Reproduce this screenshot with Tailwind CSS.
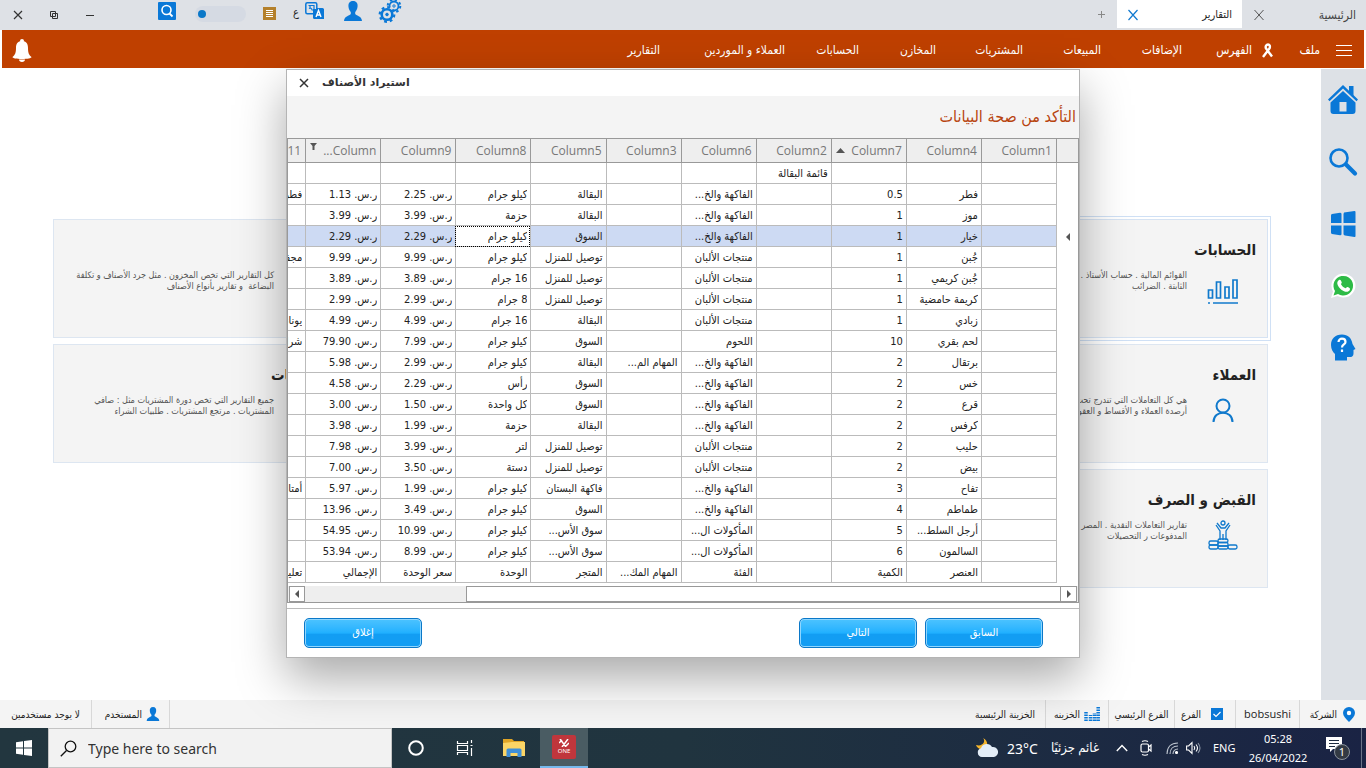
<!DOCTYPE html>
<html lang="ar" dir="rtl">
<head>
<meta charset="utf-8">
<title>التقارير</title>
<script src="https://cdn.jsdelivr.net/npm/@tailwindcss/browser@4"></script>
</head>
<body class="relative flex h-screen flex-col overflow-hidden bg-white font-['DejaVu_Sans_Condensed','DejaVu_Sans',sans-serif] text-[11px] text-[#222]">

<!-- title bar -->
<header class="flex h-[30px] shrink-0 items-center justify-between bg-[#dee1e6]">
  <div class="flex h-full items-start">
    <div class="flex h-7 w-[124px] items-center justify-between pt-[2px] pr-[10px] pl-[10px]">
      <a href="#" class="text-[12px] text-[#444]">الرئيسية</a>
      <button aria-label="إغلاق الرئيسية" class="pl-[1px]"><svg class="size-3" viewBox="0 0 12 12" stroke="#555" fill="none"><path d="M1.500 1l9 10M10.500 1l-9 10"/></svg></button>
    </div>
    <div class="flex h-7 w-[125px] items-center justify-between bg-white pt-[2px] pr-[10px] pl-[10px]">
      <a href="#">التقارير</a>
      <button aria-label="إغلاق التقارير"><svg class="size-3" viewBox="0 0 12 12" stroke="#1079d0" stroke-width="1.200" fill="none"><path d="M1.500 1l9 10M10.500 1l-9 10"/></svg></button>
    </div>
    <button aria-label="تبويب جديد" class="mr-3 flex h-7 items-center"><svg class="size-[7px]" viewBox="0 0 7 7" stroke="#888" fill="none"><path d="M3.500 0v7M0 3.500h7"/></svg></button>
  </div>
  <div dir="ltr" class="flex h-full w-[406px] items-start">
    <div class="flex h-full w-[158px] items-center pl-[13px]">
      <button aria-label="إغلاق" class="w-9"><svg class="size-[10px]" viewBox="0 0 10 10" stroke="#333" stroke-width="1.200" fill="none"><path d="M1 1l8 8M9 1L1 9"/></svg></button>
      <button aria-label="استعادة" class="w-9"><svg class="size-[10px]" viewBox="0 0 10 10" stroke="#333" fill="none"><path d="M1.500 1.500h5v5h-5zM3.500 3.500h5v5h-5z"/></svg></button>
      <button aria-label="تصغير"><svg class="size-[10px]" viewBox="0 0 10 10" stroke="#333" fill="none"><path d="M1 5.500h8"/></svg></button>
    </div>
    <button aria-label="بحث" class="mt-[2px]"><svg class="size-[18px]" viewBox="0 0 18 18"><rect width="18" height="18" rx="1" fill="#0a78d7"/><circle cx="8.500" cy="8" r="4.500" fill="none" stroke="#fff" stroke-width="1.600"/><path d="M11.500 11.500l3 3" stroke="#fff" stroke-width="1.800"/></svg></button>
    <label class="mt-[6px] ml-[19px] flex h-4 w-[51px] items-center rounded-full bg-[#d5dae3] pl-[3px]">
      <input type="checkbox" aria-label="الوضع" class="size-2 appearance-none rounded-full bg-[#0a78c8]">
    </label>
    <button aria-label="قائمة" class="mt-[7px] ml-[17px]"><svg class="size-[13px]" viewBox="0 0 13 13"><path fill="#b4802b" d="M0 0h13v13H0z"/><path stroke="#fff" d="M3 3.500h7M3 5.500h7M3 7.500h7M3 9.500h7"/></svg></button>
    <span class="mt-[5px] w-[29px] pr-[6px] text-right">ع</span>
    <button aria-label="اللغة" class="mt-[1px]"><svg class="size-[19px]" viewBox="0 0 19 19"><rect x="8" y="7" width="11" height="11" rx="1.500" fill="#0a78d7"/><rect x=".8" y="1.800" width="11" height="11" rx="1.500" fill="#dee1e6" stroke="#0a78d7" stroke-width="1.500"/><path d="M8 8h11v10H9.500L8 16z" fill="#0a78d7"/><path d="M3.500 4.500h5.500v3.500M4 7.500q2-1.500 3.500 2M5 4.500v2" fill="none" stroke="#0a78d7" stroke-width="1.200"/><path d="M11 16l2.500-6.500L16 16M12 14h3" fill="none" stroke="#fff" stroke-width="1.400"/></svg></button>
    <button aria-label="المستخدم" class="mt-[1px] ml-5"><svg class="h-5 w-[18px]" viewBox="0 0 18 20" fill="#0a78d7"><path d="M9 0C5.500 0 4 2.500 4.500 6c.3 2.500 1.500 4 2.300 5v2C5 15 .5 15 0 20h18c-.5-5-5-5-6.800-7v-2c.8-1 2-2.500 2.300-5C14 2.500 12.500 0 9 0z"/></svg></button>
    <button aria-label="الإعدادات" class="ml-4"><svg class="size-6" viewBox="0 0 24 24" fill="none" stroke="#0a78d7"><circle cx="16" cy="6" r="4.500" stroke-width="1.800"/><circle cx="16" cy="6" r="6.300" stroke-width="2" stroke-dasharray="2.400 2.550"/><circle cx="16" cy="6" r="1.200"/><circle cx="9" cy="14.500" r="8" fill="#dee1e6" stroke="none"/><circle cx="9" cy="14.500" r="5.300" stroke-width="2.600"/><circle cx="9" cy="14.500" r="7.300" stroke-width="2.200" stroke-dasharray="2.800 2.930"/><circle cx="9" cy="14.500" r="1.300" fill="#0a78d7"/></svg></button>
  </div>
</header>

<!-- main menu -->
<nav class="mx-[2px] flex h-[38px] shrink-0 items-center bg-[#bf4000] pt-[2px] text-[12px] text-white">
  <button aria-label="القائمة" class="mr-3 w-8"><svg class="h-[11px] w-4" viewBox="0 0 16 11" stroke="#fff"><path d="M0 .5h16M0 5.500h16M0 10.500h16"/></svg></button>
  <a href="#" class="w-[46px]">ملف</a>
  <a href="#" class="flex w-[92px] items-center gap-[9px]"><svg class="h-[15px] w-[13px]" viewBox="0 0 13 15" fill="none" stroke="#fff" stroke-width="2.400"><path d="M2 14L8.500 5.500C9.500 3 8.500 1.500 7 1.500S4 3 5 5.500l6 8"/></svg>الفهرس</a>
  <a href="#" class="w-[81px]">الإضافات</a>
  <a href="#" class="w-[78px]">المبيعات</a>
  <a href="#" class="w-[87px]">المشتريات</a>
  <a href="#" class="w-[77px]">المخازن</a>
  <a href="#" class="w-[74px]">الحسابات</a>
  <a href="#" class="w-[125px]">العملاء و الموردين</a>
  <a href="#">التقارير</a>
  <button aria-label="التنبيهات" class="mr-auto ml-[10px]"><svg class="h-[23px] w-5" viewBox="0 0 20 23" fill="#fff"><circle cx="10" cy="2" r="2"/><path d="M10 2C5.500 2 4 5 4 9c0 5-1 7-3.500 9 0 1.200 4 2 9.500 2s9.500-.8 9.500-2C17 16 16 14 16 9c0-4-1.500-7-6-7zM7 20.500c0 1.200 1.200 2.500 3 2.500s3-1.300 3-2.500z"/></svg></button>
</nav>

<div class="flex min-h-0 flex-1 pt-px">
  <!-- side tools -->
  <aside class="flex w-[45px] shrink-0 flex-col items-center gap-[30px] bg-[#dde1e6] pt-[15px] pr-[2px]">
    <button aria-label="الرئيسية"><svg class="size-8" viewBox="0 0 32 32" fill="#0a78d7"><path d="M22 2h4.500v10L22 8z"/><path d="M16 1L1 15.500l1.500 1.800L16 4.500l13.500 12.800L31 15.500z"/><path fill-rule="evenodd" d="M16 7L3.500 18.500V27c0 2 1 3 3 3h19c2 0 3-1 3-3v-8.500zM12.500 18h7v9.500h-7z"/></svg></button>
    <button aria-label="بحث"><svg class="size-8" viewBox="0 0 32 32" fill="none" stroke="#0a78d7"><circle cx="12" cy="12" r="8.500" stroke-width="2.600"/><path d="M19 18.500L28 27.500" stroke-width="4.200" stroke-linecap="round"/></svg></button>
    <button aria-label="ويندوز"><svg class="size-8" viewBox="0 0 32 32" fill="#0a78d7"><path d="M5 6l8-1.200q1.500 0 1.500 1.200v9H4V7.500Q4 6.200 5 6zM17 4.500L27.500 3q1 0 1 1v11H16.500V6zM4 17.500h10.500V26q0 1.500-1.500 1.300L5 26q-1-.3-1-1.500zM16.500 17.500h12V28q0 1.200-1 1L18 27.500q-1.500-.2-1.500-1.500z"/></svg></button>
    <button aria-label="واتساب"><svg class="size-8" viewBox="0 0 32 32"><path d="M4 28l2-6.500A12 12 0 1 1 10.500 26z" fill="#fff"/><path d="M6.500 25.500L8 21A9.800 9.800 0 1 1 11 24z" fill="#2dbb46"/><path d="M12 10c1.500-1 2 .5 2.700 2.200.4 1-1 1.500-.7 2 1 2 2.500 3.300 4.500 4 .6.200 1.300-1.400 2-1.100 2 .9 3 1.200 2.300 2.900-1 2-3.500 2.200-5.800 1.200-3.500-1.500-5-3.500-6.200-5.900-1-2-.5-4.200 1.200-5.300z" fill="#fff"/></svg></button>
    <button aria-label="مساعدة"><svg class="size-8" viewBox="0 0 32 32"><path d="M15 2.500C8 2.500 4 7 4 13c0 4.500 2 7 4 9v6.500h12V25h3c3 0 3.500-2 3.500-4v-3l2-1-3-5C24.500 6 21 2.500 15 2.500z" fill="#0a78d7"/><path d="M11.500 10c0-4.500 7-4.500 7 0 0 2.500-3.500 2.500-3.500 5.500M15 17.500v2.500" fill="none" stroke="#fff" stroke-width="2.200"/></svg></button>
  </aside>

  <!-- report cards -->
  <main class="min-w-0 flex-1 pt-[150px] pr-[53px] pl-[53px]">
    <div class="grid grid-cols-4 grid-rows-[repeat(3,119px)] gap-x-[5px] gap-y-[6px]">
      <section class="border border-[#d6e3f3] bg-[#f4f4f4] px-[11px] pt-[18px] outline outline-offset-2 outline-[#cfe0f5]">
        <h2 class="text-[15px]/6 font-bold">الحسابات</h2>
        <div class="flex gap-5 pt-2 pr-[17px]">
          <svg class="mt-2 size-8 shrink-0" viewBox="0 0 32 32" fill="none" stroke="#1079cc" stroke-width="1.700"><path d="M1.500 12h4v8h-4zM9.500 4h4v16h-4zM18 9h4v11h-4zM26 2h4v18h-4zM6 25h25M1 25h2"/></svg>
          <p class="text-[9px]/[11px] whitespace-nowrap text-[#555]">القوائم المالية . حساب الأستاذ .<br>الثابتة . الضرائب</p>
        </div>
      </section>
      <section class="col-start-4 border border-[#dde6f1] bg-[#f4f4f4] px-[11px] pt-[18px]">
        <h2 class="text-[15px]/6 font-bold">المخازن</h2>
        <p class="pt-2 pr-[67px] text-[9px]/[11px] whitespace-nowrap text-[#555]">كل التقارير التي تخص المخزون . مثل جرد الأصناف و تكلفة<br>البضاعة &nbsp;و تقارير بأنواع الأصناف</p>
      </section>
      <section class="border border-[#dde6f1] bg-[#f4f4f4] px-[11px] pt-[18px]">
        <h2 class="text-[15px]/6 font-bold">العملاء</h2>
        <div class="flex gap-5 pt-2 pr-[17px]">
          <svg class="size-8 shrink-0" viewBox="0 0 32 32" fill="none" stroke="#1079cc" stroke-width="2"><circle cx="16" cy="11" r="6.500"/><path d="M6.500 27c0-12.500 19-12.500 19 0"/></svg>
          <p class="text-[9px]/[11px] whitespace-nowrap text-[#555]">هي كل التعاملات التي تندرج تحت<br>أرصدة العملاء و الأقساط و العقود</p>
        </div>
      </section>
      <section class="col-start-4 border border-[#dde6f1] bg-[#f4f4f4] px-[11px] pt-[18px]">
        <h2 class="text-[15px]/6 font-bold">المشتريات</h2>
        <p class="pt-2 pr-[67px] text-[9px]/[11px] whitespace-nowrap text-[#555]">جميع التقارير التي تخص دورة المشتريات مثل : صافي<br>المشتريات . مرتجع المشتريات . طلبيات الشراء</p>
      </section>
      <section class="border border-[#dde6f1] bg-[#f4f4f4] px-[11px] pt-[18px]">
        <h2 class="text-[15px]/6 font-bold">القبض و الصرف</h2>
        <div class="flex gap-5 pt-2 pr-[17px]">
          <svg class="size-8 shrink-0" viewBox="0 0 32 32" fill="none" stroke="#1079cc" stroke-width="1.300"><circle cx="16" cy="3" r="2"/><path d="M10 3l4 5h4l4-5M9 5l4 6v9M23 5l-4 6v9M16 14v6"/><rect x="11" y="19" width="10" height="3.500" rx="1.700"/><rect x="2" y="21" width="9" height="4" rx="1.700"/><rect x="11" y="22.500" width="10" height="3.500" rx="1.500"/><rect x="2" y="25" width="9" height="4" rx="1.700"/><rect x="11" y="26" width="10" height="3" rx="1.500"/><rect x="21" y="25" width="9" height="4" rx="1.700"/></svg>
          <p class="text-[9px]/[11px] whitespace-nowrap text-[#555]">تقارير التعاملات النقدية . المصر<br>المدفوعات ر التحصيلات</p>
        </div>
      </section>
    </div>
  </main>
</div>

<!-- status bar -->
<footer class="flex h-7 shrink-0 items-center bg-[#f4f4f4] text-[10px]">
  <div class="flex h-full w-[67px] items-center gap-[6px] border-l border-[#d8d8d8] pr-[11px]">
    <svg class="h-[15px] w-3" viewBox="0 0 12 15"><path d="M6 0a6 6 0 0 1 6 6c0 3-3 6-6 9-3-3-6-6-6-9a6 6 0 0 1 6-6z" fill="#0a78d7"/><circle cx="6" cy="6" r="2.200" fill="#fff"/></svg>الشركة</div>
  <div class="flex h-full w-16 items-center justify-center border-l border-[#d8d8d8] font-['Open_Sans',sans-serif] text-[11px]">bobsushi</div>
  <label class="flex h-full w-[61px] items-center gap-[10px] border-l border-[#d8d8d8] pr-3">
    <span class="relative flex"><input type="checkbox" checked class="size-3 appearance-none bg-[#0a78d7]"><svg class="pointer-events-none absolute inset-0 size-3" viewBox="0 0 12 12" fill="none" stroke="#fff" stroke-width="1.200"><path d="M2.500 6l2.500 2.500L9.500 4"/></svg></span>الفرع</label>
  <div class="flex h-full w-[66px] items-center justify-center border-l border-[#d8d8d8] whitespace-nowrap">الفرع الرئيسي</div>
  <div class="flex h-full w-[63px] items-center gap-1 border-l border-[#d8d8d8] pr-2">
    <svg class="h-[14px] w-4 shrink-0" viewBox="0 0 16 14" stroke="#0a78d7" fill="none" stroke-width="3.500"><path stroke-dasharray="1.500 1" d="M2 14V4M6.500 14V8M10.500 14V6M14.200 14V0"/></svg>الخزينه</div>
  <div class="flex h-full items-center pr-[10px]">الخزينة الرئيسية</div>
  <div class="mr-auto flex h-full w-[79px] items-center gap-1 border-x border-[#d8d8d8] pr-[9px]">
    <svg class="h-[14px] w-[14px] shrink-0" viewBox="0 0 18 20" fill="#0a78d7"><path d="M9 0C5.500 0 4 2.500 4.500 6c.3 2.500 1.500 4 2.300 5v2C5 15 .5 15 0 20h18c-.5-5-5-5-6.800-7v-2c.8-1 2-2.500 2.300-5C14 2.500 12.500 0 9 0z"/></svg>المستخدم</div>
  <div class="flex h-full w-[91px] items-center justify-center whitespace-nowrap">لا يوجد مستخدمين</div>
</footer>

<!-- taskbar -->
<div dir="ltr" class="z-20 flex h-10 shrink-0 items-center bg-linear-to-r from-[#22363f] via-[#20343f] to-[#1a2344] font-['Noto_Sans','DejaVu_Sans_Condensed',sans-serif] text-white">
  <button aria-label="Start" class="flex w-12 justify-center"><svg class="size-4" viewBox="0 0 16 16" fill="#fff"><path d="M0 2.300l7-1v6.200H0zM8 1.100L16 0v7.500H8zM0 8.500h7v6.200l-7-1zM8 8.500h8V16l-8-1.100z"/></svg></button>
  <label class="flex h-full w-[344px] items-center gap-[11px] border border-[#c4c4c4] bg-[#f2f2f2] pl-[11px]">
    <svg class="size-[17px]" viewBox="0 0 17 17" fill="none" stroke="#111" stroke-width="1.300"><circle cx="10.500" cy="6.500" r="5.300"/><path d="M6.500 10.500L.8 16.300"/></svg>
    <input type="text" aria-label="Search" placeholder="Type here to search" class="w-60 text-[14px] outline-none placeholder:text-[#333]">
  </label>
  <button aria-label="Cortana" class="flex w-12 justify-center"><svg class="size-4" viewBox="0 0 16 16" fill="none" stroke="#fff" stroke-width="2"><circle cx="8" cy="8" r="6.800"/></svg></button>
  <button aria-label="Task view" class="flex w-12 justify-center"><svg class="h-4 w-[17px]" viewBox="0 0 17 16" fill="none" stroke="#fff" stroke-width="1.200"><path d="M1.500 1v2.500h10V1M1.500 15v-2.500h10V15M1.500 5.500h10v5h-10zM15.500 0v3M15.500 8v8M14.500 5.500h2"/></svg></button>
  <button aria-label="Explorer" class="flex w-[52px] justify-center"><svg class="h-[18px] w-[22px]" viewBox="0 0 22 18"><path fill="#e0a526" d="M0 0h9l2 2h10v4H0z"/><path fill="#fbd566" d="M0 4l9-1h13v14H0z"/><path fill="#3f8fd8" d="M3.500 18V11q0-1.500 1.500-1.500h12q1.500 0 1.500 1.500v7h-4v-4h-7v4z"/></svg></button>
  <button aria-label="ONE" class="flex h-full w-12 flex-col items-center justify-center border-b-2 border-[#76b9ed] bg-[#4a5c63]">
    <span class="flex h-6 w-6 flex-col items-center justify-center gap-px rounded-xs bg-[#c0363c]"><svg class="h-2 w-[10px]" viewBox="0 0 10 8" stroke="#fff" stroke-width="1.500" fill="none"><path d="M1 0l6 8M9 0L3 8M0 4l3-3M7 7l3-3"/></svg><span class="text-[6px]/[7px]">ONE</span></span>
  </button>
  <div class="ml-auto flex h-full items-center">
    <svg class="h-5 w-[23px]" viewBox="0 0 23 20"><path d="M7 0c3 3 0 9-7 7 1 3 4 5 8 4s5-8-1-11z" fill="#f5b52b"/><path d="M6 19a4.500 4.500 0 0 1-1-8.800A6 6 0 0 1 16 9a5 5 0 0 1 2 10z" fill="#e3edf7"/></svg>
    <span class="ml-2 w-[29px] text-[14px]">23°C</span>
    <span dir="rtl" class="ml-[9px] w-[54px] text-[13px] whitespace-nowrap">غائم جزئيًا</span>
    <button aria-label="Hidden icons" class="ml-[17px]"><svg class="block h-2 w-3" viewBox="0 0 12 8" fill="none" stroke="#fff" stroke-width="1.400"><path d="M.8 7L6 1.500 11.200 7"/></svg></button>
    <svg class="ml-3 h-4 w-3" viewBox="0 0 12 16" fill="none" stroke="#fff" stroke-width="1.200"><rect x="1" y="4" width="7.500" height="8" rx="1.500"/><path d="M8.500 7l2.500-2v6l-2.500-2M2 1.500Q5 0 8 1.500M2 14.500Q5 16 8 14.500"/></svg>
    <svg class="ml-[14px] h-3 w-3" viewBox="0 0 12 12" fill="none" stroke="#bcc4cf" stroke-width="1.100"><path d="M1 12C1 5 5 1 12 1M4 12c0-5 3-8 8-8M7 12c0-3 2-5 5-5"/><circle cx="10.500" cy="10.500" r="1" fill="#fff" stroke="#fff"/></svg>
    <svg class="ml-2 h-[14px] w-4" viewBox="0 0 16 14" fill="none" stroke="#fff" stroke-width="1.100"><path d="M.6 5h2L6 1.500v11L2.600 9h-2zM8 5q1.500 2 0 4M10 3.500q3 3.500 0 7"/><path stroke="#8a94a5" d="M12 2q4 5 0 10"/></svg>
    <span class="ml-[11px] w-[26px] text-[11px]">ENG</span>
    <div class="ml-[7px] w-16 text-center text-[11px]/[19px]"><div>05:28</div><div>26/04/2022</div></div>
    <button aria-label="Notifications" class="ml-[15px]"><svg class="h-[26px] w-[26px]" viewBox="0 0 26 26"><path fill="#fff" d="M1 2h16v12H8l-3 3v-3H1z"/><path stroke="#1d2b40" d="M4 5.500h10M4 8.500h10M4 11.500h6"/><circle cx="17" cy="17" r="7.500" fill="#333a44" stroke="#8a929c"/><text x="17" y="21" text-anchor="middle" font-size="11" fill="#fff">1</text></svg></button>
    <span class="mr-1 ml-[10px] h-full w-px bg-[#6a7388]"></span>
  </div>
</div>

<!-- import dialog -->
<div role="dialog" aria-labelledby="dlg" class="absolute top-[69px] left-1/2 z-10 flex w-[794px] -translate-x-1/2 flex-col border border-[#b4b4b4] bg-white shadow-[0_20px_45px_rgba(0,0,0,0.34)]">
  <div class="flex h-[26px] items-center justify-end gap-3 pl-[11px]">
    <h1 id="dlg" class="font-['DejaVu_Sans',sans-serif] text-[11px] font-bold text-[#333]">استيراد الأصناف</h1>
    <button aria-label="إغلاق"><svg class="size-3" viewBox="0 0 12 12" stroke="#333" stroke-width="1.500" fill="none"><path d="M2 2l8 8M10 2l-8 8"/></svg></button>
  </div>
  <div class="flex h-[42px] items-center bg-[#f4f4f4] pr-[3px] text-[16px] text-[#b8440f]">التأكد من صحة البيانات</div>
  <div class="overflow-hidden border border-[#999]">
    <table class="w-[848px] table-fixed border-separate border-spacing-0 font-['DejaVu_Sans_Condensed',sans-serif] text-[11px]">
      <thead id="head"></thead>
      <tbody id="rows"></tbody>
    </table>
    <div dir="ltr" class="mt-[3px] flex h-[16px] items-stretch bg-[#eee] px-[1px]">
      <button aria-label="يسار" class="flex w-4 items-center justify-center border border-[#999] bg-white"><svg class="h-2 w-1" viewBox="0 0 4 8" fill="#555"><path d="M4 0v8L0 4z"/></svg></button>
      <span class="flex-1"></span>
      <span class="w-[595px] border border-[#999] bg-white"></span>
      <button aria-label="يمين" class="flex w-4 items-center justify-center border border-l-0 border-[#999] bg-white"><svg class="h-2 w-1" viewBox="0 0 4 8" fill="#555"><path d="M0 0v8l4-4z"/></svg></button>
    </div>
  </div>
  <div class="mt-[5px] flex h-[49px] items-center gap-2 border-t border-[#bbb] pr-9 pl-[17px] text-white">
    <button class="h-[30px] w-[118px] rounded-[5px] border border-[#0b78c8] bg-linear-to-b from-[#4cc3ff] from-0% via-[#1fb0ff] via-50% to-[#129df3] to-55% shadow-[inset_0_0_0_1px_#8fd6ff]">السابق</button>
    <button class="h-[30px] w-[118px] rounded-[5px] border border-[#0b78c8] bg-linear-to-b from-[#4cc3ff] from-0% via-[#1fb0ff] via-50% to-[#129df3] to-55% shadow-[inset_0_0_0_1px_#8fd6ff]">التالي</button>
    <button class="mr-auto h-[30px] w-[118px] rounded-[5px] border border-[#0b78c8] bg-linear-to-b from-[#4cc3ff] from-0% via-[#1fb0ff] via-50% to-[#129df3] to-55% shadow-[inset_0_0_0_1px_#8fd6ff]">إغلاق</button>
  </div>
</div>

<script>
const heads = ['Column1','Column4','Column7','Column2','Column6','Column3','Column5','Column8','Column9','Column...','Column11'];
const F = 'الفاكهة والخ...', D = 'منتجات الألبان', K = 'كيلو جرام', B = 'البقالة', S = 'السوق', T = 'توصيل للمنزل', M = 'المأكولات ال...', R = 'ر.س. ';
// item, quantity, category, tasks, store, unit, unit price, total, notes
const data = [
  ['فطر','0.5',F,'',B,K,R+'2.25',R+'1.13','فطر'],
  ['موز','1',F,'',B,'حزمة',R+'3.99',R+'3.99',''],
  ['خيار','1',F,'',S,K,R+'2.29',R+'2.29',''],
  ['جُبن','1',D,'',T,K,R+'9.99',R+'9.99','مجفف'],
  ['جُبن كريمي','1',D,'',T,'16 جرام',R+'3.89',R+'3.89',''],
  ['كريمة حامضية','1',D,'',T,'8 جرام',R+'2.99',R+'2.99',''],
  ['زبادي','1',D,'',B,'16 جرام',R+'4.99',R+'4.99','يوناني'],
  ['لحم بقري','10','اللحوم','',S,K,R+'7.99',R+'79.90','شرائح'],
  ['برتقال','2',F,'المهام الم...',B,K,R+'2.99',R+'5.98',''],
  ['خس','2',F,'',S,'رأس',R+'2.29',R+'4.58',''],
  ['قرع','2',F,'',S,'كل واحدة',R+'1.50',R+'3.00',''],
  ['كرفس','2',F,'',B,'حزمة',R+'1.99',R+'3.98',''],
  ['حليب','2',D,'',T,'لتر',R+'3.99',R+'7.98',''],
  ['بيض','2',D,'',T,'دستة',R+'3.50',R+'7.00',''],
  ['تفاح','3',F,'','فاكهة البستان',K,R+'1.99',R+'5.97','أمتار'],
  ['طماطم','4',F,'',S,K,R+'3.49',R+'13.96',''],
  ['أرجل السلط...','5',M,'','سوق الأس...',K,R+'10.99',R+'54.95',''],
  ['السالمون','6',M,'','سوق الأس...',K,R+'8.99',R+'53.94',''],
  ['العنصر','الكمية','الفئة','المهام المك...','المتجر','الوحدة','سعر الوحدة','الإجمالي','تعليق']
];
const sort = '<svg class="h-[5px] w-[9px]" viewBox="0 0 9 5" fill="#555"><path d="M0 5h9L4.500 0z"/></svg>';
const filter = '<svg class="mb-2 h-[7px] w-[7px]" viewBox="0 0 7 7" fill="#555"><path d="M0 0h7L4.500 3v4h-2V3z"/></svg>';
document.getElementById('head').innerHTML =
  '<tr class="h-6"><th class="w-[22px] border-b border-l border-[#999] bg-[#eee]"></th>' +
  heads.map((h, i) => '<th scope="col" class="w-[75px] border-b border-l border-[#999] bg-[#eee] p-0 pr-[4px] pl-1 text-right font-[\'Open_Sans\',sans-serif] text-[12px] font-normal text-[#777]"><div class="flex items-center justify-between"><span>' + h + '</span>' + (i === 2 ? sort : i === 9 ? filter : '') + '</div></th>').join('') + '</tr>';
const all = [['', '', '', 'قائمة البقالة', '', '', '', '', '', '', '']];
data.forEach(r => all.push(['', r[0], r[1], '', ...r.slice(2)]));
document.getElementById('rows').innerHTML = all.map((r, n) =>
  '<tr class="h-[21px]"><td class="border-l border-[#bbb] p-0">' + (n === 3 ? '<svg class="mr-2 h-2 w-1" viewBox="0 0 4 8" fill="#555"><path d="M4 0v8L0 4z"/></svg>' : '') + '</td>' +
  r.map((c, i) => '<td class="' + (n === 3 && i === 7 ? 'border-b border-l border-[#bbb] bg-white p-0 pr-[3px] outline-1 -outline-offset-1 outline-dotted outline-black' : n === 3 ? 'border-b border-l border-[#bbb] bg-[#cddaf3] p-0 pr-[3px]' : 'border-b border-l border-[#bbb] bg-white p-0 pr-[3px]') + '"><div class="h-5 overflow-hidden leading-[22px] whitespace-nowrap">' + c + '</div></td>').join('') + '</tr>').join('');
</script>
</body>
</html>
